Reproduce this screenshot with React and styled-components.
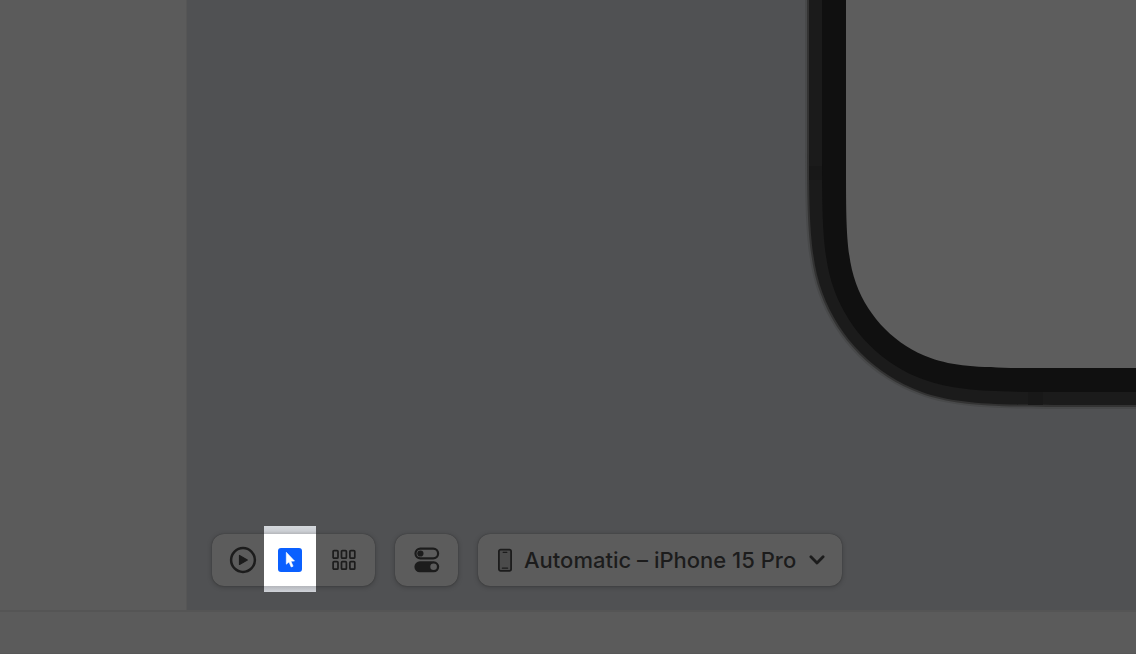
import React from "react";
import styled, { createGlobalStyle } from "styled-components";

const ink = "#1c1c1c";

const GlobalStyle = createGlobalStyle`
  * { box-sizing: border-box; }
  body { margin: 0; background: #5c5c5c; font-family: Inter, "Liberation Sans", sans-serif; }
`;

const Workspace = styled.div`
  display: flex;
  flex-direction: column;
  min-height: 100vh;
  background: #5c5c5c;
`;

const Editor = styled.div`
  display: flex;
  flex: 1;
`;

const Sidebar = styled.aside`
  flex: 0 0 187px;
  background: #5b5b5b;
  border-right: 1px solid #565656;
`;

const Canvas = styled.main`
  position: relative;
  flex: 1;
  display: flex;
  flex-direction: column;
  justify-content: flex-end;
  overflow: hidden;
  background: #505153;
`;

const DeviceDrawing = styled.svg`
  position: absolute;
  top: 0;
  right: 0;
  width: 336px;
  height: 420px;
`;

const Toolbar = styled.div`
  position: relative;
  display: flex;
  gap: 20px;
  padding: 24px 25px;
`;

const Pill = styled.div`
  display: flex;
  align-items: center;
  height: 52px;
  border-radius: 12px;
  background: #5c5c5c;
  box-shadow: 0 0 1px rgba(0, 0, 0, 0.4), 0 1px 5px rgba(0, 0, 0, 0.25);
`;

const IconButton = styled.button`
  display: flex;
  align-items: center;
  justify-content: ${(p) => p.$align || "center"};
  width: ${(p) => p.$width}px;
  height: 52px;
  padding: ${(p) => p.$padding || "0"};
  border: 0;
  background: none;
  color: ${ink};
`;

const SpotlightButton = styled(IconButton)`
  height: 66px;
  margin-top: -2px;
  padding-top: 2px;
  background: linear-gradient(
    #d5d9dd 0,
    #cccfd4 5px,
    #b4b6ba 8px,
    #fff 8px,
    #fff 60px,
    #b4b6bb 60px,
    #d0d3d9 66px
  );
`;

const DevicePicker = styled(Pill)`
  gap: 12px;
  padding: 0 17px 0 20px;
  color: ${ink};
`;

const DeviceSelect = styled.select`
  appearance: none;
  padding: 0;
  border: 0;
  background: none;
  color: ${ink};
  font-family: inherit;
  font-size: 22px;
  font-weight: 500;
  line-height: 28px;
`;

const Footer = styled.footer`
  height: 44px;
  border-top: 2px solid #555;
  border-bottom: 1px solid #575757;
  background: #5b5b5b;
`;

// Outline of a device whose lower-left corner (x, y) has a continuous curve.
function outline(x, y, r) {
  const p = (a, b) => `${(x + a * r).toFixed(2)} ${(y - b * r).toFixed(2)}`;
  return [
    `M${x} -10 L${p(0, 1.5287)}`,
    `C${p(0, 1.0885)} ${p(0, 0.837)} ${p(0.0749, 0.6315)}`,
    `C${p(0.1691, 0.3728)} ${p(0.3728, 0.1691)} ${p(0.6315, 0.0749)}`,
    `C${p(0.837, 0)} ${p(1.0885, 0)} ${p(1.5287, 0)}`,
    `L350 ${y} L350 -10 Z`,
  ].join(" ");
}

function Device() {
  return (
    <DeviceDrawing viewBox="0 0 336 420" aria-hidden="true">
      <path d={outline(5, 409, 182)} fill="#48494a" />
      <path d={outline(7, 407, 180)} fill="#333" />
      <path d={outline(9, 405, 178)} fill="#1b1b1b" />
      <path d="M9 166h13v14H9zM228 392h15v13h-15z" fill="#181818" />
      <path d={outline(22, 392, 162)} fill="#101010" />
      <path d={outline(46, 368, 134)} fill="#5d5d5d" />
    </DeviceDrawing>
  );
}

const PlayIcon = () => (
  <svg width="28" height="28" viewBox="0 0 28 28">
    <circle cx="14" cy="14" r="11.9" fill="none" stroke="currentColor" strokeWidth="2.5" />
    <path d="M10.5 9.5v9l7.8-4.5z" fill="currentColor" stroke="currentColor" strokeWidth="1.2" strokeLinejoin="round" />
  </svg>
);

const SelectIcon = () => (
  <svg width="24" height="24" viewBox="0 0 24 24">
    <rect width="24" height="24" rx="3" fill="#0a60ff" />
    <path
      d="M8.3 4.3v11.9l2.7-2.3 2.2 5.1 1.9-.8-2.2-5 3.6-.2z"
      fill="#fff"
      stroke="#fff"
      strokeWidth="0.6"
      strokeLinejoin="round"
    />
  </svg>
);

const GridIcon = () => (
  <svg width="24" height="22" viewBox="0 0 24 22" fill="none" stroke="currentColor" strokeWidth="1.7">
    {[1.1, 9.5, 17.9].map((x) =>
      [1.6, 12.6].map((y) => <rect key={`${x}-${y}`} x={x} y={y} width="4.9" height="7.6" rx="1" />)
    )}
  </svg>
);

const TogglesIcon = () => (
  <svg width="26" height="26" viewBox="0 0 26 26">
    <rect x="1.5" y="1.6" width="22.6" height="9.8" rx="4.9" fill="none" stroke="currentColor" strokeWidth="2.2" />
    <circle cx="6.4" cy="6.5" r="3.1" fill="currentColor" />
    <rect x="0.4" y="14.3" width="24.8" height="11" rx="5.5" fill="currentColor" />
    <circle cx="19.6" cy="19.8" r="3.3" fill="#5c5c5c" />
  </svg>
);

const PhoneIcon = () => (
  <svg width="14" height="24" viewBox="0 0 14 24">
    <rect x="0.9" y="1.7" width="12.2" height="21.2" rx="1.8" fill="#4b4b4b" stroke="currentColor" strokeWidth="1.8" />
    <path d="M5.2 4.4h3.6M4.4 20.2h5.2" stroke="currentColor" strokeWidth="1.2" strokeLinecap="round" />
  </svg>
);

const ChevronIcon = () => (
  <svg width="16" height="10" viewBox="0 0 16 10">
    <path
      d="M1.9 1.8 8 8l6.1-6.2"
      fill="none"
      stroke="currentColor"
      strokeWidth="2.8"
      strokeLinecap="round"
      strokeLinejoin="round"
    />
  </svg>
);

export default function App() {
  return (
    <>
      <GlobalStyle />
      <Workspace>
        <Editor>
          <Sidebar />
          <Canvas>
            <Device />
            <Toolbar>
              <Pill>
                <IconButton $width={52} $align="flex-start" $padding="0 0 0 17px" aria-label="Live preview">
                  <PlayIcon />
                </IconButton>
                <SpotlightButton $width={52} aria-label="Selectable preview">
                  <SelectIcon />
                </SpotlightButton>
                <IconButton $width={59} $align="flex-start" $padding="0 0 0 16px" aria-label="Variants">
                  <GridIcon />
                </IconButton>
              </Pill>
              <Pill>
                <IconButton $width={63} aria-label="Device settings">
                  <TogglesIcon />
                </IconButton>
              </Pill>
              <DevicePicker>
                <PhoneIcon />
                <DeviceSelect aria-label="Preview device" defaultValue="auto">
                  <option value="auto">Automatic – iPhone 15 Pro</option>
                </DeviceSelect>
                <ChevronIcon />
              </DevicePicker>
            </Toolbar>
          </Canvas>
        </Editor>
        <Footer />
      </Workspace>
    </>
  );
}
